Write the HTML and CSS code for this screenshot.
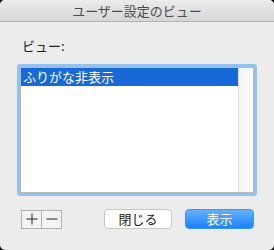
FILE: index.html
```html
<!DOCTYPE html>
<html lang="ja">
<head>
    <meta charset="UTF-8">
    <title>ユーザー設定のビュー</title>
    <link rel="stylesheet" href="styles.css">
</head>
<body>

<div class="window">
    <div class="titlebar">ユーザー設定のビュー</div>
    <div class="content">
        <div class="label">ビュー:</div>
        <div class="list-ring">
            <div class="list">
                <div class="rows">
                    <div class="row selected">ふりがな非表示</div>
                </div>
                <div class="scroll-track"></div>
            </div>
        </div>
        <div class="footer">
            <div class="pm">
                <div class="pm-btn">
                    <svg width="12" height="12" viewBox="0 0 12 12"><path d="M6 0.5V11.5M0.5 6H11.5" stroke="#222" stroke-width="1"/></svg>
                </div>
                <div class="pm-btn">
                    <svg width="12" height="12" viewBox="0 0 12 12"><path d="M0.5 6H11.5" stroke="#222" stroke-width="1"/></svg>
                </div>
            </div>
            <button class="btn">閉じる</button>
            <button class="btn primary">表示</button>
        </div>
    </div>
</div>

</body>
</html>
```

FILE: styles.css
```css
body {
    margin: 0;
    background: #000;
    font-family: "Noto Sans CJK JP", "Noto Sans", sans-serif;
}
.window {
    width: 274px;
    height: 250px;
    background: #ececec;
    border-radius: 5px;
    overflow: hidden;
}
.titlebar {
    height: 21px;
    line-height: 22px;
    border-bottom: 1px solid #b4b4b4;
    background: linear-gradient(#ebebeb, #d6d6d6);
    text-align: center;
    font-size: 13px;
    color: #4c4c4c;
}
.content {
    padding: 0 17px;
}
.label {
    margin: 16px 0 10px 5px;
    height: 16px;
    line-height: 16px;
    font-size: 13px;
    color: #222;
}
.list-ring {
    height: 126px;
    border: 3px solid #95c1f1;
    border-radius: 3px;
}
.list {
    display: flex;
    height: 124px;
    border: 1px solid #b8b8b8;
    background: #fff;
}
.rows {
    flex: 1;
}
.row {
    height: 18px;
    line-height: 18px;
    padding-left: 2px;
    font-size: 13px;
}
.selected {
    background: #1769d8;
    color: #fff;
}
.scroll-track {
    width: 14px;
    background: linear-gradient(90deg, #f3f3f3, #fbfbfb);
    border-left: 1px solid #e2e2e2;
}
.footer {
    display: flex;
    align-items: center;
    margin-top: 13px;
    height: 20px;
}
.pm {
    display: flex;
    margin-left: 4px;
    border: 1px solid #b0b0b0;
    height: 17px;
}
.pm-btn {
    width: 19px;
    display: flex;
    align-items: center;
    justify-content: center;
    background: #f2f2f2;
}
.pm-btn + .pm-btn {
    border-left: 1px solid #b0b0b0;
}
.btn {
    height: 20px;
    padding: 0;
    border: 1px solid #c6c6c6;
    border-radius: 4px;
    background: #fff;
    font-family: inherit;
    font-size: 13px;
    line-height: 18px;
    color: #222;
    width: 68px;
    margin-left: 42px;
}
.btn.primary {
    width: 69px;
    margin-left: 13px;
    border-color: #3f93f5;
    background: linear-gradient(#66b0fc, #1b83fb);
    color: #fff;
}
```
